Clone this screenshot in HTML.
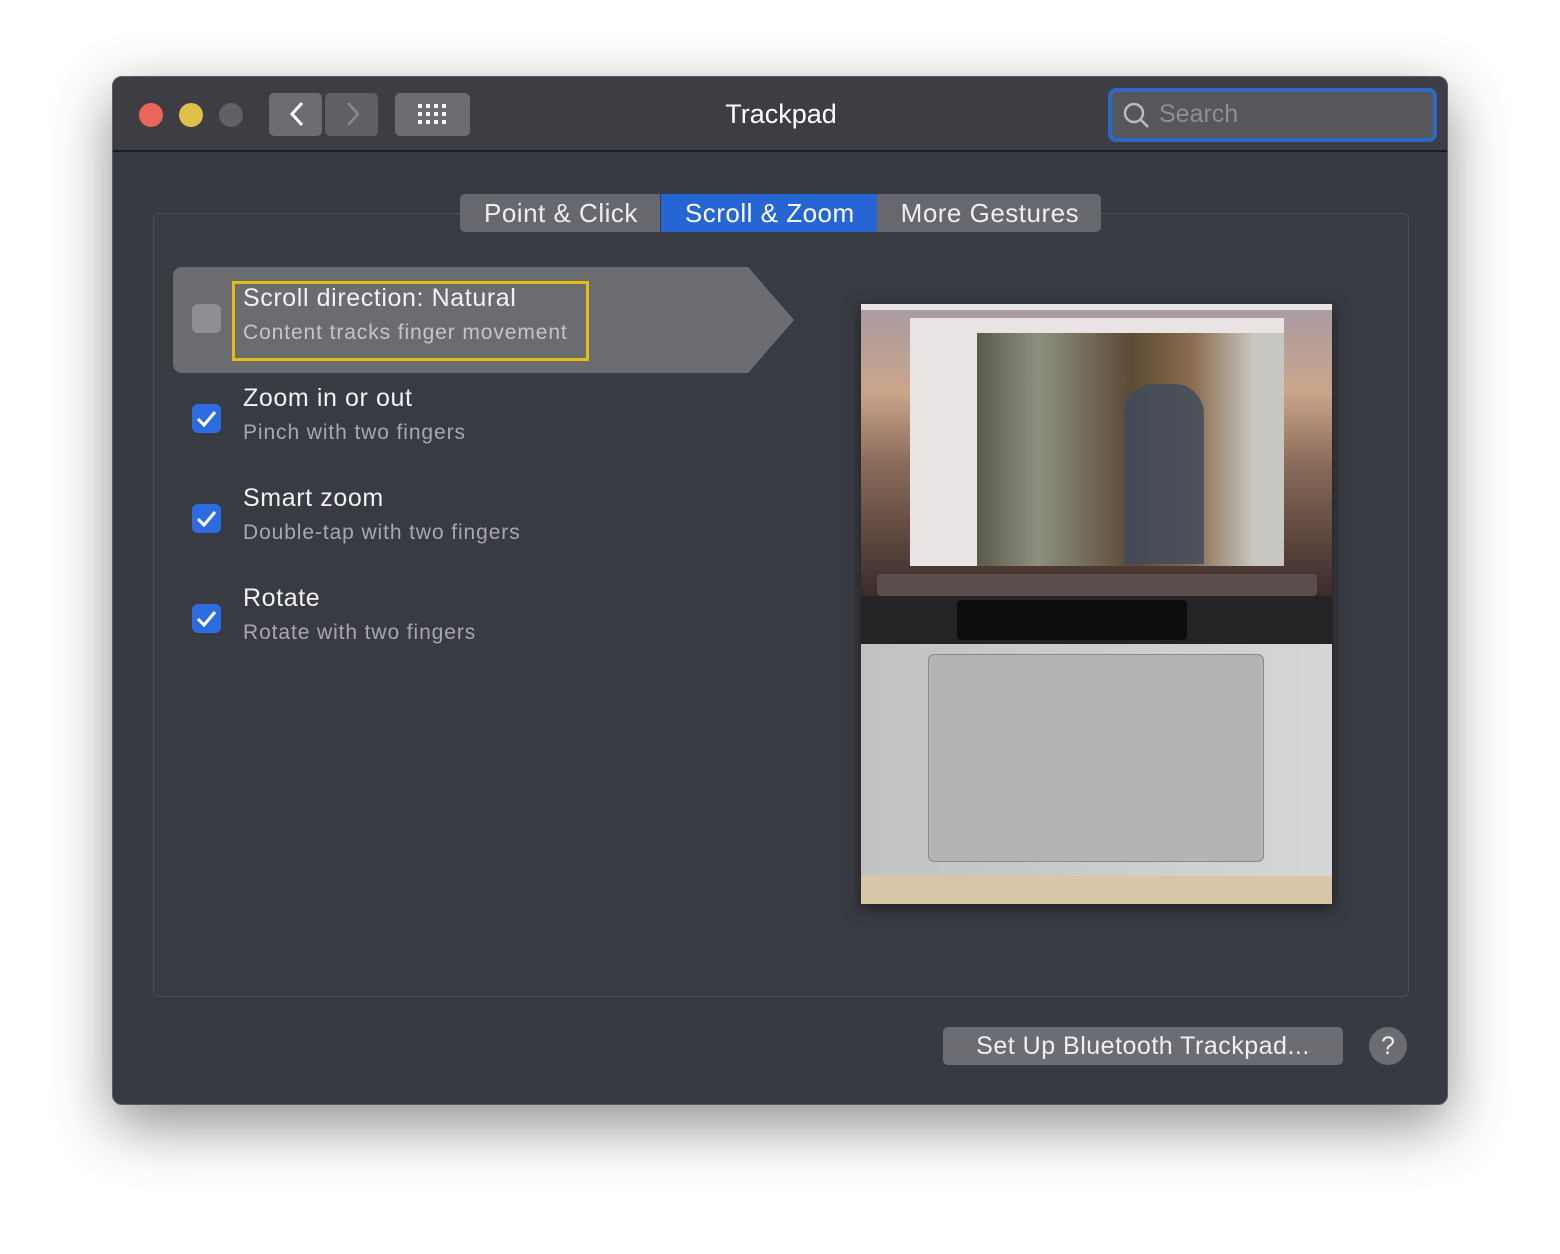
<!DOCTYPE html><html><head><style>
*{margin:0;padding:0;box-sizing:border-box}
body{width:1560px;height:1254px;background:#fff;font-family:"Liberation Sans",sans-serif;position:relative;overflow:hidden}
.win{position:absolute;left:112px;top:76px;width:1336px;height:1029px;background:#383a41;border-radius:10px;box-shadow:0 20px 60px rgba(0,0,0,.45);border:1px solid #5a5c61;overflow:hidden}
.tb{position:absolute;left:0;top:0;width:100%;height:75px;background:#3c3e44;border-bottom:2px solid #1d1e21}
.dot{position:absolute;top:26px;width:24px;height:24px;border-radius:50%}
.btn{position:absolute;background:#6b6d72;border-radius:5px}
.a{position:absolute;color:#fff;white-space:nowrap}
.box{position:absolute;left:40px;top:136px;width:1256px;height:784px;border:1px solid #4d4f55;border-radius:6px;background:#393b42}
.tabs{position:absolute;left:347px;top:117px;height:38px;display:flex;border-radius:5px;overflow:hidden;font-size:26px;color:#eee;letter-spacing:0.5px}
.tabs div{padding:4px 22px 4px 24px;background:#66686d;line-height:30px}
.tabs .s{background:#2665d4;color:#fff;border-left:1px solid #3a3c42}
.t1{font-size:25px;color:#f2f2f2;letter-spacing:0.6px}
.t2{font-size:21px;color:#a7a8ab;letter-spacing:0.9px}
.cb{position:absolute;left:79px;width:29px;height:29px;border-radius:6px;background:#2d6ce0}
.cb svg{position:absolute;left:4px;top:5px}
</style></head><body>
<div class="win">
<div class="tb">
<div class="dot" style="left:26px;background:#ec6559"></div>
<div class="dot" style="left:66px;background:#e0c04a"></div>
<div class="dot" style="left:106px;background:#5f6166"></div>
<div class="btn" style="left:156px;top:16px;width:53px;height:43px"></div>
<div class="btn" style="left:212px;top:16px;width:53px;height:43px;background:#5e6065"></div>
<svg style="position:absolute;left:170px;top:22px" width="30" height="30"><path d="M19 4 L9 15 L19 26" stroke="#fff" stroke-width="3" fill="none"/></svg>
<svg style="position:absolute;left:224px;top:22px" width="30" height="30"><path d="M11 4 L21 15 L11 26" stroke="#888a8e" stroke-width="2.5" fill="none"/></svg>
<div class="btn" style="left:282px;top:16px;width:75px;height:43px"></div>
<svg style="position:absolute;left:305px;top:27px" width="30" height="22" fill="#fff"><g id="r"><rect x="0" y="0" width="4" height="4"/><rect x="8" y="0" width="4" height="4"/><rect x="16" y="0" width="4" height="4"/><rect x="24" y="0" width="4" height="4"/></g><use href="#r" y="8"/><use href="#r" y="16"/></svg>
<div class="a" style="left:0;width:1336px;top:22px;text-align:center;font-size:27px">Trackpad</div>
<div style="position:absolute;left:995px;top:11px;width:329px;height:54px;border:4px solid #2f68c4;border-radius:8px;background:#55575c"></div>
<svg style="position:absolute;left:1010px;top:25px" width="28" height="28"><circle cx="11" cy="11" r="9" stroke="#bbb" stroke-width="2.5" fill="none"/><path d="M17 17 L25 25" stroke="#bbb" stroke-width="2.5"/></svg>
<div class="a" style="left:1046px;top:23px;font-size:25px;color:#8d8f93">Search</div>
</div>
<div class="box"></div>
<div class="tabs"><div>Point &amp; Click</div><div class="s">Scroll &amp; Zoom</div><div>More Gestures</div></div>
<svg style="position:absolute;left:60px;top:190px" width="624" height="106"><path d="M10 0 H575 L621 53 L575 106 H10 Q0 106 0 96 V10 Q0 0 10 0Z" fill="#6b6c70"/></svg>
<div style="position:absolute;left:79px;top:227px;width:29px;height:29px;border-radius:6px;background:#8e8f93"></div>
<div style="position:absolute;left:119px;top:204px;width:357px;height:80px;border:3px solid #e3bc14"></div>
<div class="a t1" style="left:130px;top:207px">Scroll direction: Natural</div>
<div class="a t2" style="left:130px;top:244px;color:#c4c5c7">Content tracks finger movement</div>
<div class="cb" style="top:327px"><svg width="21" height="19"><path d="M2 10 L8 16 L19 3" stroke="#fff" stroke-width="3" fill="none"/></svg></div>
<div class="a t1" style="left:130px;top:307px">Zoom in or out</div>
<div class="a t2" style="left:130px;top:344px">Pinch with two fingers</div>
<div class="cb" style="top:427px"><svg width="21" height="19"><path d="M2 10 L8 16 L19 3" stroke="#fff" stroke-width="3" fill="none"/></svg></div>
<div class="a t1" style="left:130px;top:407px">Smart zoom</div>
<div class="a t2" style="left:130px;top:444px">Double-tap with two fingers</div>
<div class="cb" style="top:527px"><svg width="21" height="19"><path d="M2 10 L8 16 L19 3" stroke="#fff" stroke-width="3" fill="none"/></svg></div>
<div class="a t1" style="left:130px;top:507px">Rotate</div>
<div class="a t2" style="left:130px;top:544px">Rotate with two fingers</div>
<div style="position:absolute;left:748px;top:227px;width:471px;height:600px;box-shadow:0 4px 14px rgba(0,0,0,.5);overflow:hidden;background:#ccc">
<div style="position:absolute;left:0;top:0;width:100%;height:292px;background:linear-gradient(180deg,#a89aa4 0%,#caa58a 30%,#8a6b5a 55%,#3a2b2a 100%)"></div>
<div style="position:absolute;left:0;top:0;width:100%;height:6px;background:#e8e4e6"></div>
<div style="position:absolute;left:49px;top:14px;width:374px;height:248px;background:#e9e4e3"></div>
<div style="position:absolute;left:116px;top:29px;width:307px;height:233px;background:linear-gradient(90deg,#5b5b4c,#8d8f80 20%,#5b4b37 50%,#8a6b4d 70%,#c7c6c0 90%)"></div>
<div style="position:absolute;left:263px;top:80px;width:80px;height:180px;background:#3f4a5c;border-radius:30px 30px 0 0;opacity:.8"></div>
<div style="position:absolute;left:16px;top:270px;width:440px;height:22px;background:#5a4d4d;border-radius:4px"></div>
<div style="position:absolute;left:0;top:292px;width:100%;height:48px;background:#242427"></div>
<div style="position:absolute;left:96px;top:296px;width:230px;height:40px;background:#0d0d0e;border-radius:4px"></div>
<div style="position:absolute;left:0;top:340px;width:100%;height:232px;background:linear-gradient(90deg,#c2c2c4,#d6d6d8)"></div>
<div style="position:absolute;left:67px;top:350px;width:336px;height:208px;background:#b4b4b6;border:1px solid #8a8a8c;border-radius:6px"></div>
<div style="position:absolute;left:0;top:572px;width:100%;height:28px;background:#d9c6a6"></div>
</div>
<div style="position:absolute;left:830px;top:950px;width:400px;height:38px;background:#6b6d72;border-radius:5px;color:#f0f0f0;font-size:25px;text-align:center;line-height:38px;letter-spacing:0.5px">Set Up Bluetooth Trackpad...</div>
<div style="position:absolute;left:1256px;top:950px;width:38px;height:38px;border-radius:50%;background:#6b6d72;color:#eee;font-size:25px;text-align:center;line-height:38px">?</div>
</div>
</body></html>
